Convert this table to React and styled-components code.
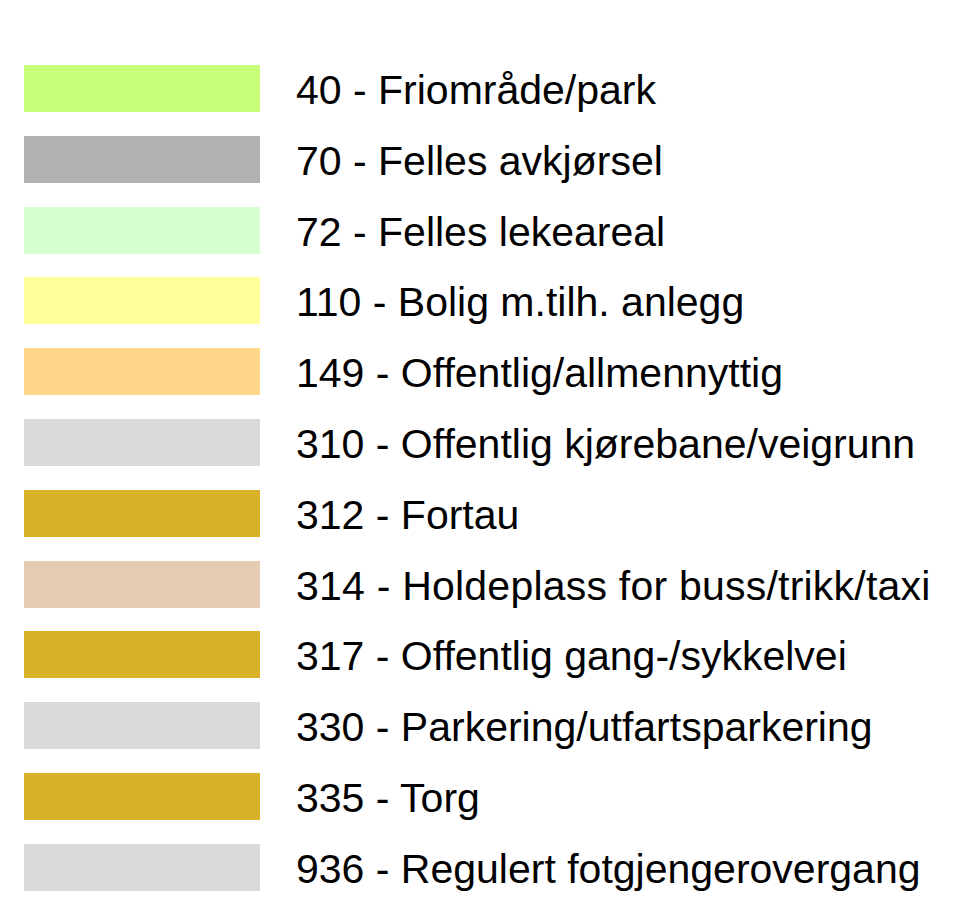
import React from "react";
import styled, { createGlobalStyle } from "styled-components";

const Global = createGlobalStyle`
  html, body { margin: 0; padding: 0; background: #ffffff; }
  body { font-family: "Liberation Sans", Arial, sans-serif; }
`;

const Legend = styled.ul`
  list-style: none;
  margin: 0;
  padding: 65px 0 0 24px;
  display: flex;
  flex-direction: column;
  gap: 23.8px;
`;

const Row = styled.li`
  display: flex;
  align-items: center;
  height: 47px;
  gap: 36px;
`;

const Swatch = styled.span`
  flex: none;
  width: 236px;
  height: 47px;
  background: ${(p) => p.$color};
`;

const Label = styled.span`
  font-family: "Liberation Sans", Arial, sans-serif;
  font-size: 41px;
  line-height: 47px;
  color: #000;
  white-space: nowrap;
  letter-spacing: ${(p) => p.$track || 0}px;
  position: relative;
  top: 2px;
`;

const items = [
  ["#c8ff78", "40 - Friområde/park"],
  ["#b2b2b2", "70 - Felles avkjørsel"],
  ["#d5ffcf", "72 - Felles lekeareal"],
  ["#ffff9c", "110 - Bolig m.tilh. anlegg"],
  ["#ffd68a", "149 - Offentlig/allmennyttig"],
  ["#d9d9d9", "310 - Offentlig kjørebane/veigrunn"],
  ["#d9b22a", "312 - Fortau"],
  ["#e6cbb3", "314 - Holdeplass for buss/trikk/taxi", 0.22],
  ["#d9b22a", "317 - Offentlig gang-/sykkelvei"],
  ["#d9d9d9", "330 - Parkering/utfartsparkering"],
  ["#d9b22a", "335 - Torg"],
  ["#d9d9d9", "936 - Regulert fotgjengerovergang"],
];

export default function App() {
  return (
    <>
      <Global />
      <Legend>
        {items.map(([c, t, track]) => (
          <Row key={t}>
            <Swatch $color={c} />
            <Label $track={track}>{t}</Label>
          </Row>
        ))}
      </Legend>
    </>
  );
}
